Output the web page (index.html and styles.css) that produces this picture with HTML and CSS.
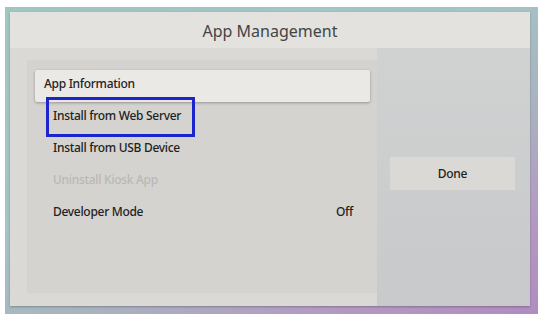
FILE: index.html
```html
<!DOCTYPE html>
<html lang="en">
<head>
    <meta charset="UTF-8">
    <meta name="viewport" content="width=device-width, initial-scale=1.0">
    <link rel="stylesheet" href="styles.css">
    <title>App Management</title>
</head>
<body>
    <div class="frame">
        <div class="panel">
            <div class="title">App Management</div>
            <div class="content">
                <div class="left">
                    <div class="list">
                        <div class="item selected">App Information</div>
                        <div class="item marked">Install from Web Server</div>
                        <div class="item">Install from USB Device</div>
                        <div class="item disabled">Uninstall Kiosk App</div>
                        <div class="item split"><span>Developer Mode</span><span>Off</span></div>
                    </div>
                </div>
                <div class="right">
                    <button class="done">Done</button>
                </div>
            </div>
        </div>
    </div>
</body>
</html>
```

FILE: styles.css
```css
*{
    box-sizing: border-box;
}
body{
    margin: 0;
    background: #fff;
    height: 314px;
    overflow: hidden;
    font-family: "Noto Sans", sans-serif;
}
.frame{
    margin: 7px 4px 0 5px;
    height: 307px;
    padding: 5px 8px 3px 5px;
    background: linear-gradient(155deg, #9fc6c0 0%, #a4c3c4 40%, #a9b3be 62%, #b39ac2 82%, #b08cc0 100%);
}
.panel{
    height: 294px;
    background: #dfdedb;
    display: flex;
    flex-direction: column;
    box-shadow: 0 1px 2px rgba(0,0,0,0.25);
}
.title{
    height: 36px;
    padding-top: 8px;
    text-align: center;
    font-size: 16px;
    color: #444;
    background: #e3e2df;
}
.content{
    flex: 1;
    display: flex;
}
.left{
    width: 367px;
    padding: 12px 0 13px 17px;
    background: #dbd9d6;
}
.list{
    height: 100%;
    background: #d5d3d0;
    padding-top: 10px;
}
.item{
    height: 32px;
    display: flex;
    align-items: center;
    padding: 0 24px 5px 26px;
    font-size: 12px;
    font-weight: 500;
    color: #222;
    letter-spacing: -0.3px;
}
.item.selected{
    margin: 0 7px 0 8px;
    padding-left: 9px;
    background: #ebe9e6;
    border-radius: 2px;
    box-shadow: 0 1px 3px rgba(0,0,0,0.3);
}
.item.marked{
    position: relative;
}
.item.marked::before{
    content: "";
    position: absolute;
    left: 19px;
    top: -5px;
    width: 143px;
    height: 34px;
    border: 3px solid #1c25cc;
}
.item.disabled{
    color: #bab8b5;
}
.item.split{
    justify-content: space-between;
}
.right{
    flex: 1;
    background: linear-gradient(180deg, #d0d1d1, #c8c9ca);
    padding: 109px 15px 0 13px;
}
.done{
    width: 125px;
    height: 33px;
    border: none;
    background: #dbd9d6;
    font-family: "Noto Sans", sans-serif;
    font-size: 12px;
    font-weight: 500;
    color: #222;
    letter-spacing: -0.3px;
}
```
